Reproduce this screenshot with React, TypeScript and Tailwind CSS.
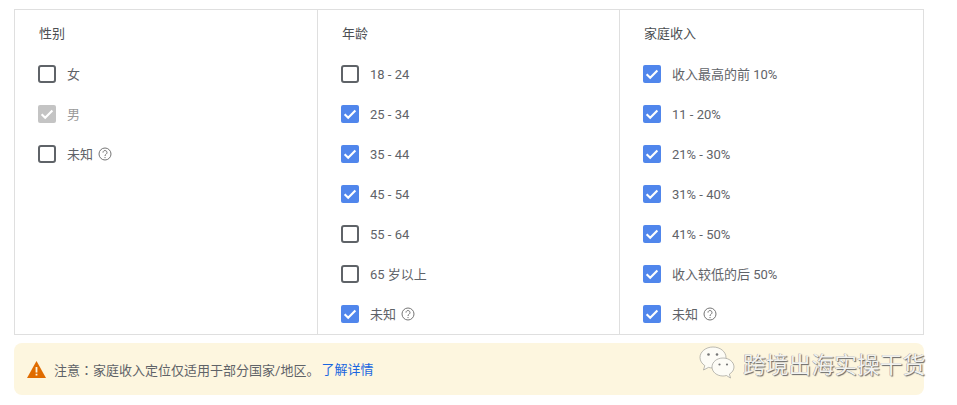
import React from 'react';

type Item = { label: string; state?: 'on' | 'off' | 'disabled'; help?: boolean };

const columns: { title: string; items: Item[] }[] = [
  {
    title: '性别',
    items: [
      { label: '女' },
      { label: '男', state: 'disabled' },
      { label: '未知', help: true },
    ],
  },
  {
    title: '年龄',
    items: [
      { label: '18 - 24' },
      { label: '25 - 34', state: 'on' },
      { label: '35 - 44', state: 'on' },
      { label: '45 - 54', state: 'on' },
      { label: '55 - 64' },
      { label: '65 岁以上' },
      { label: '未知', state: 'on', help: true },
    ],
  },
  {
    title: '家庭收入',
    items: [
      { label: '收入最高的前 10%', state: 'on' },
      { label: '11 - 20%', state: 'on' },
      { label: '21% - 30%', state: 'on' },
      { label: '31% - 40%', state: 'on' },
      { label: '41% - 50%', state: 'on' },
      { label: '收入较低的后 50%', state: 'on' },
      { label: '未知', state: 'on', help: true },
    ],
  },
];

function Checkbox({ state = 'off' }: { state?: Item['state'] }) {
  if (state === 'off') {
    return <span className="w-[18px] h-[18px] shrink-0 rounded-[3px] border-2 border-[#5f6368]" />;
  }
  return (
    <span
      className={`w-[18px] h-[18px] shrink-0 rounded-[2px] flex items-center justify-center ${
        state === 'on' ? 'bg-[#5086ec]' : 'bg-[#c4c4c4]'
      }`}
    >
      <svg viewBox="0 0 18 18" className="w-[18px] h-[18px]" fill="none">
        <path d="M3.6 9.2 7.2 12.8 14.4 5.4" stroke="#fff" strokeWidth="2.1" />
      </svg>
    </span>
  );
}

function HelpIcon() {
  return (
    <svg viewBox="0 0 14 14" className="w-[14px] h-[14px] ml-[5px]" fill="none" stroke="#757575">
      <circle cx="7" cy="7" r="6" strokeWidth="1" />
      <path d="M5 5.6a2 2 0 1 1 3.2 1.500C7.400 7.700 7 8 7 9" strokeWidth="1" />
      <path d="M7 10v1.100" strokeWidth="1" />
    </svg>
  );
}

function WechatIcon() {
  return (
    <svg viewBox="0 0 36 34" className="w-[36px] h-[34px]">
      <g fill="#fdfcf6" stroke="#8f8f8a" strokeWidth="0.6">
        <path d="M14 1C6.800 1 1 5.700 1 11.500c0 3.300 1.900 6.200 4.800 8.100L4.500 24l5-2.600c1.400.4 3 .6 4.500.6 7.200 0 13-4.700 13-10.500S21.200 1 14 1z" />
        <path d="M24 12c-6.100 0-11 4-11 9s4.900 9 11 9c1.200 0 2.300-.2 3.400-.5l4.100 2.500-1.100-3.900c2.800-1.600 4.600-4.200 4.600-7.100 0-5-4.900-9-11-9z" />
      </g>
      <g fill="#777">
        <circle cx="9.500" cy="8.500" r="1.300" />
        <circle cx="18" cy="8.500" r="1.300" />
        <circle cx="20.500" cy="18.500" r="1.100" />
        <circle cx="28" cy="18.500" r="1.100" />
      </g>
    </svg>
  );
}

export default function App() {
  return (
    <div className="relative w-[957px] h-[405px] bg-white overflow-hidden pt-[9px] pl-[14px] font-['Roboto','Noto_Sans_CJK_SC',sans-serif] text-[13px] text-[#5f6368]">
      <div className="grid grid-cols-[303px_302px_305px] w-[910px] h-[326px] border border-[#dfdfdf] box-border">
        {columns.map((col, i) => (
          <div key={col.title} className={`pl-[23px] pt-[15px] ${i < 2 ? 'border-r border-[#dfdfdf]' : ''}`}>
            <div className="h-[18px] leading-[18px] pl-px text-[#4c4f53]">{col.title}</div>
            <div className="flex flex-col gap-[22px] mt-[22px]">
              {col.items.map((item) => (
                <div key={item.label} className="flex items-center h-[18px]">
                  <Checkbox state={item.state} />
                  <span className={`ml-[11px] pt-[2px] ${item.state === 'disabled' ? 'text-[#9a9a9a]' : ''}`}>{item.label}</span>
                  {item.help && <HelpIcon />}
                </div>
              ))}
            </div>
          </div>
        ))}
      </div>
      <div className="mt-[8px] w-[910px] h-[52px] rounded-[8px] bg-[#fdf6df] flex items-center pl-[13px]">
        <svg viewBox="0 0 19 17" className="w-[19px] h-[17px]">
          <path d="M9.500 0 19 17H0z" fill="#e06c00" />
          <path d="M8.600 6h1.800v5.500H8.600zM8.600 12.800h1.800v1.800H8.600z" fill="#fdf6df" />
        </svg>
        <span className="ml-[8px] pt-[2px] text-[#5f6368]">
          注意<span className="font-['Noto_Sans_CJK_TC',sans-serif]">：</span>家庭收入定位仅适用于部分国家/地区。
        </span>
        <span className="ml-[2px] pt-[2px] text-[#1a66e0]">了解详情</span>
      </div>
      <div className="absolute left-[699px] top-[346px] flex items-center">
        <WechatIcon />
        <span className="ml-[8px] mt-[5px] text-[22.8px] leading-[28px] text-[#f2f2ef] [text-shadow:1px_1px_1px_#666,-0.5px_-0.5px_0.5px_#999]">
          跨境出海实操干货
        </span>
      </div>
    </div>
  );
}
